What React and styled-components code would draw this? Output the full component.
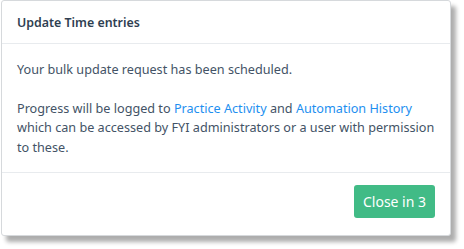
import React from 'react';
import styled, { createGlobalStyle } from 'styled-components';

const GlobalStyle = createGlobalStyle`
  html, body {
    margin: 0;
    padding: 0;
    background: #ffffff;
  }
  body {
    font-family: "Noto Sans", "Open Sans", sans-serif;
    width: 464px;
    height: 249px;
    overflow: hidden;
  }
`;

const Page = styled.div`
  padding: 0 0 0 1px;
`;

const Dialog = styled.div`
  width: 448px;
  height: 234px;
  background: #fff;
  border: 1px solid #d6d9dc;
  border-radius: 3px;
  box-shadow: 5px 6px 4px rgba(0, 0, 0, 0.32);
  display: flex;
  flex-direction: column;
`;

const Header = styled.div`
  height: 42px;
  display: flex;
  align-items: center;
  padding: 0 15px;
  border-bottom: 1px solid #e8ebee;
`;

const Title = styled.h2`
  margin: 0;
  font-size: 12.4px;
  font-weight: 600;
  color: #2f3f52;
`;

const Body = styled.div`
  padding: 16px 10px 15px 15px;
  border-bottom: 1px solid #e8ebee;
`;

const Para = styled.p`
  margin: 0;
  font-size: 12.65px;
  line-height: 19.5px;
  color: #435366;

  & + & {
    margin-top: 19px;
  }
`;

const Link = styled.a`
  color: #1e8ff0;
  text-decoration: none;
`;

const Footer = styled.div`
  flex: 1;
  display: flex;
  justify-content: flex-end;
  align-items: flex-start;
  padding: 12px 15px 0;
`;

const Button = styled.button`
  width: 81px;
  height: 33px;
  border: none;
  border-radius: 3px;
  background: #41bb86;
  color: #fff;
  font-family: inherit;
  font-size: 14px;
  padding: 0;
`;

export default function App() {
  return (
    <>
      <GlobalStyle />
      <Page>
        <Dialog>
          <Header>
            <Title>Update Time entries</Title>
          </Header>
          <Body>
            <Para>Your bulk update request has been scheduled.</Para>
            <Para>
              Progress will be logged to <Link>Practice Activity</Link> and{' '}
              <Link>Automation History</Link> which can be accessed by FYI
              administrators or a user with permission to these.
            </Para>
          </Body>
          <Footer>
            <Button>Close in 3</Button>
          </Footer>
        </Dialog>
      </Page>
    </>
  );
}
